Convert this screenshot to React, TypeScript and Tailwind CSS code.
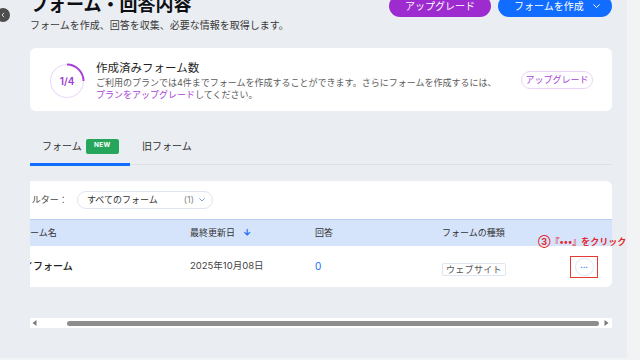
import React from "react";

function Ring() {
  return (
    <svg width="36" height="36" viewBox="0 0 36 36" className="shrink-0">
      <circle cx="18" cy="18" r="16.5" fill="none" stroke="#f0dcfa" strokeWidth="1.2" />
      <path d="M18 1.5 A16.5 16.5 0 0 1 34.5 18" fill="none" stroke="#a63fd8" strokeWidth="2" />
      <text x="18" y="21.5" textAnchor="middle" fontSize="10" fontWeight="600" fill="#9b3bcc" fontFamily="Inter, sans-serif">1/4</text>
    </svg>
  );
}

function Chevron({ color = "#fff", w = 7 }: { color?: string; w?: number }) {
  return (
    <svg width={w} height={w * 0.6} viewBox="0 0 10 6">
      <path d="M1 1 L5 5 L9 1" fill="none" stroke={color} strokeWidth="1.4" strokeLinecap="round" strokeLinejoin="round" />
    </svg>
  );
}

export default function App() {
  return (
    <div className="relative flex flex-col w-[640px] h-[360px] overflow-hidden bg-[#eaedf1] font-[Inter,'Noto_Sans_CJK_JP',sans-serif] text-[#333]">
      <div className="absolute left-[-4px] top-[8px] w-[14px] h-[14px] rounded-full bg-[#4d4d4d] flex items-center justify-center">
        <svg width="4" height="6" viewBox="0 0 4 6">
          <path d="M3 0.8 L1 3 L3 5.2" stroke="#dcdcdc" strokeWidth="1" fill="none" />
        </svg>
      </div>

      <div className="flex h-[358px]">
        <div className="ml-[30px] w-[582px] flex flex-col">
          {/* header */}
          <div className="flex justify-between mt-[-6px]">
            <div>
              <h1 className="text-[18px] leading-[22px] font-bold text-[#0d0f14]">フォーム・回答内容</h1>
              <p className="mt-[2px] text-[10px] leading-[14px] text-[#3a3a3a]">フォームを作成、回答を収集、必要な情報を取得します。</p>
            </div>
            <div className="flex gap-[7px] mt-[1px]">
              <button className="h-[22px] w-[102px] rounded-full bg-[#9d2bcf] text-white text-[10px] leading-none">アップグレード</button>
              <button className="h-[22px] w-[114px] rounded-full bg-[#116dff] text-white text-[10px] leading-none flex items-center pl-[16px] gap-[9px]">
                <span>フォームを作成</span>
                <Chevron />
              </button>
            </div>
          </div>

          {/* plan card */}
          <div className="mt-[16px] h-[63px] bg-white rounded-[6px] flex items-center px-[19px]">
            <div className="mt-[3px]">
              <Ring />
            </div>
            <div className="ml-[11px] flex-1 pt-[2px]">
              <div className="text-[11.5px] leading-[14px] text-[#1f1f1f]">作成済みフォーム数</div>
              <div className="mt-[2px] text-[9px] leading-[12px] text-[#5b5b5b]">
                ご利用のプランでは4件までフォームを作成することができます。さらにフォームを作成するには、
                <br />
                <span className="text-[#a63fd8]">プランをアップグレード</span>してください。
              </div>
            </div>
            <button className="h-[18px] w-[72px] rounded-full border border-[#ebd3f7] text-[#a63fd8] text-[9px] leading-none">アップグレード</button>
          </div>

          {/* tabs */}
          <div className="mt-[24px] flex border-b border-[#dde0e5]">
            <div className="relative w-[100px] h-[29px] pl-[12px] pb-[7px] flex items-center gap-[4px]">
              <span className="text-[10px] text-[#333]">フォーム</span>
              <span className="w-[33px] h-[15px] rounded-[2px] bg-[#26a65b] text-white text-[6.5px] font-bold flex items-center justify-center tracking-[0.3px]">NEW</span>
              <span className="absolute left-0 right-0 bottom-[-2px] h-[3px] bg-[#116dff]" />
            </div>
            <div className="h-[29px] pl-[12px] pb-[7px] flex items-center text-[10px] text-[#333]">旧フォーム</div>
          </div>

          {/* table card */}
          <div className="relative mt-[16px]">
            <div className="bg-white rounded-r-[6px] overflow-hidden">
              <div className="mt-[10px] h-[18px] flex items-center ml-[-16px]">
                <span className="text-[9px] text-[#444] w-[54px] shrink-0">フィルター：</span>
                <div className="ml-[9px] w-[136px] h-[18px] rounded-full border border-[#dfe5ef] flex items-center pl-[9px] pr-[7px]">
                  <span className="text-[9px] text-[#333]">すべてのフォーム</span>
                  <span className="ml-auto text-[9px] text-[#888]">(1)</span>
                  <span className="ml-[5px] flex items-center">
                    <Chevron color="#5b8fe0" w={6} />
                  </span>
                </div>
              </div>

              <div className="mt-[10px] h-[27px] border-t border-[#b8cff5] bg-[#d6e4fb] flex items-center ml-[-18px] text-[9px] text-[#333]">
                <div className="w-[178px] shrink-0">フォーム名</div>
                <div className="w-[125px] shrink-0 flex items-center gap-[3px]">
                  <span>最終更新日</span>
                  <span className="ml-[5px] text-[#116dff] font-bold text-[9px]">↓</span>
                </div>
                <div className="w-[127px] shrink-0">回答</div>
                <div className="w-[128px] shrink-0">フォームの種類</div>
              </div>

              <div className="h-[41px] flex items-center ml-[-18px]">
                <div className="w-[178px] shrink-0 pl-[1px] text-[10px] font-medium text-[#222]">マイフォーム</div>
                <div className="w-[125px] shrink-0 text-[9.5px] text-[#444]">2025年10月08日</div>
                <div className="w-[127px] shrink-0 text-[10px] text-[#116dff]">0</div>
                <div className="w-[128px] shrink-0">
                  <span className="inline-block border border-[#dfe6f0] rounded-[2px] px-[3px] text-[9px] leading-[10px] py-[0.5px] text-[#555] tracking-[0.3px]">ウェブサイト</span>
                </div>
                <div className="shrink-0 pt-[1px]">
                  <div className="w-[28px] h-[22px] border-[1.5px] border-[#e53935] flex items-center justify-center">
                    <div className="w-[19px] h-[18px] rounded-full border border-[#dce6f5] flex items-center justify-center text-[#116dff] text-[8px] leading-none font-bold">···</div>
                  </div>
                </div>
              </div>
            </div>
            <div className="absolute left-[508px] top-[55px] whitespace-nowrap text-[9px] leading-[12px] font-bold text-[#e3262b]">③『•••』をクリック</div>
          </div>

          {/* horizontal scrollbar */}
          <div className="mt-[31px] h-[10px] bg-white flex items-center pl-[2px] pr-[3px]">
            <svg width="5" height="6" viewBox="0 0 5 6">
              <path d="M4.5 0 L0.5 3 L4.5 6 Z" fill="#7a7a7a" />
            </svg>
            <div className="ml-[30px] h-[5px] flex-1 rounded-full bg-[#8d8d8d]" />
            <svg width="5" height="6" viewBox="0 0 5 6" className="ml-[5px]">
              <path d="M0.5 0 L4.5 3 L0.5 6 Z" fill="#7a7a7a" />
            </svg>
          </div>
        </div>
        <div className="ml-auto w-[13px] h-full bg-[#f2f3f5]" />
      </div>
      <div className="h-[2px] bg-[#f2f3f5]" />
    </div>
  );
}
